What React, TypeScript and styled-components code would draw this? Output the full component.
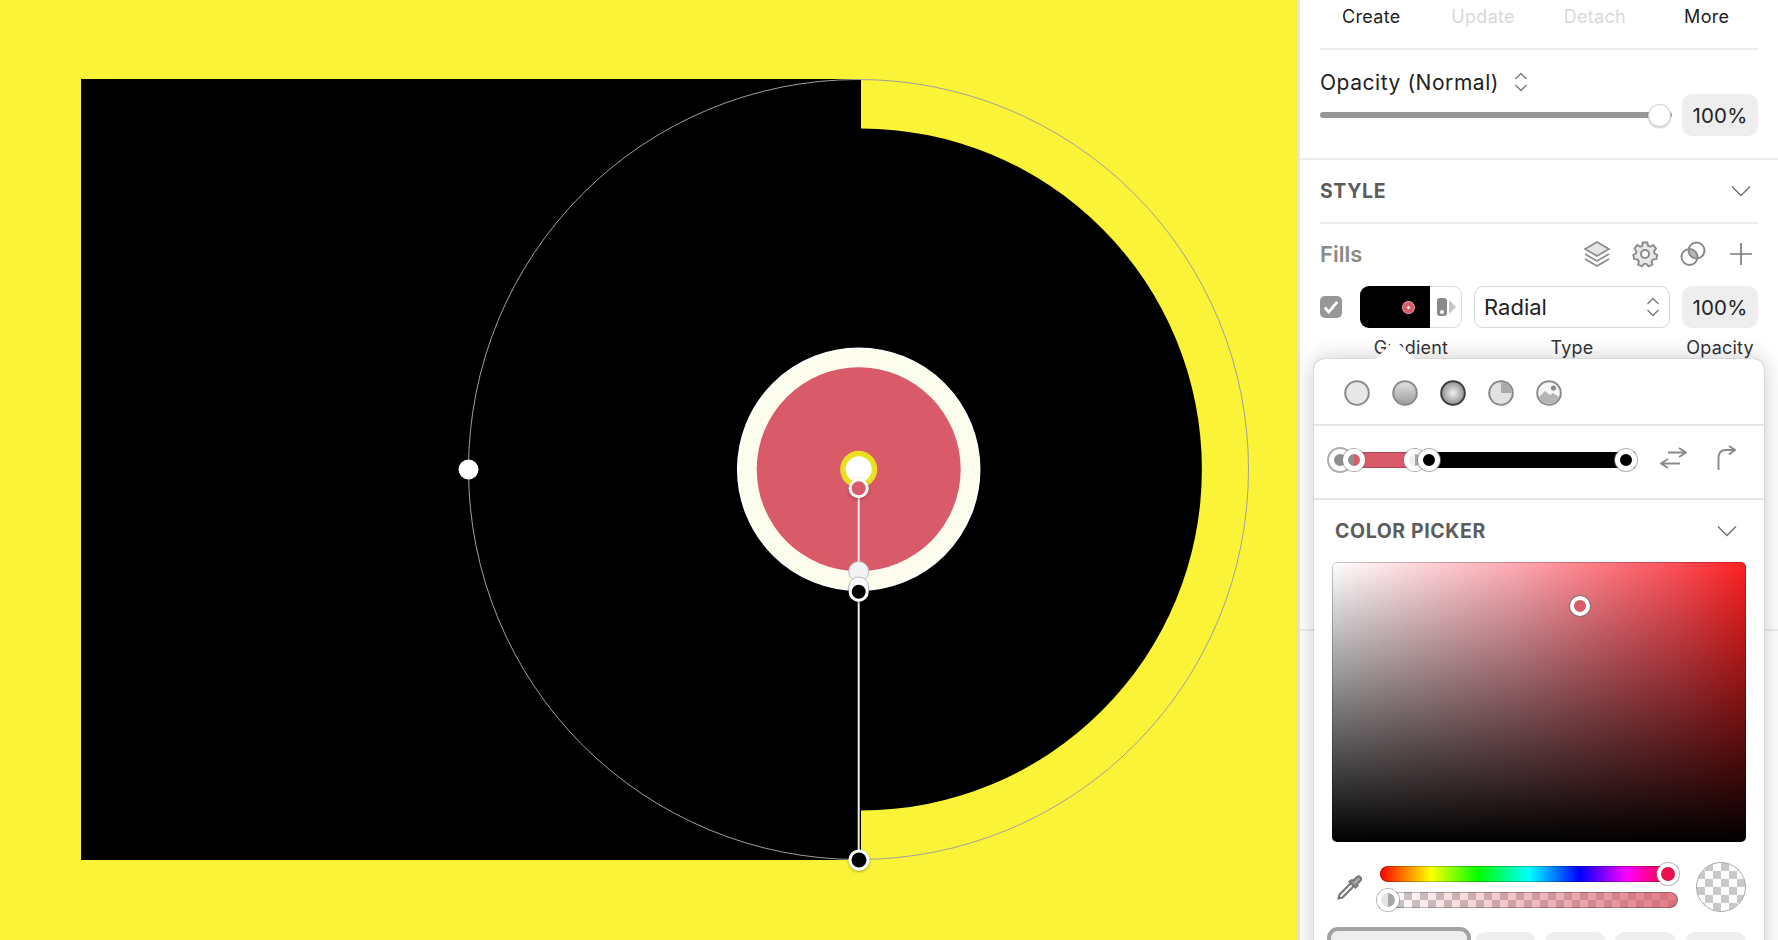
import React from "react";
import styled, { createGlobalStyle } from "styled-components";

const GlobalStyle = createGlobalStyle`
  html, body {
    margin: 0;
    height: 100%;
    overflow: hidden;
    background: #fbf337;
  }
  * {
    box-sizing: border-box;
  }
`;

const Page = styled.div`
  display: flex;
  width: 1778px;
  height: 940px;
  overflow: hidden;
  font-family: Inter, "Liberation Sans", sans-serif;
  color: #1e1e1e;
`;

const Canvas = styled.svg`
  flex: none;
  display: block;
  width: 1298px;
  height: 940px;
  background: #fbf337;
`;

const Panel = styled.aside`
  position: relative;
  flex: none;
  width: 480px;
  height: 940px;
  background: #fff;
  border-left: 2px solid #e4e4e4;
`;

const Tabs = styled.div`
  display: grid;
  grid-template-columns: repeat(4, 111.8px);
  justify-content: center;
  align-items: center;
  height: 50px;
  margin: 0 20px;
  padding-bottom: 16px;
  border-bottom: 2px solid #eaeaea;
`;

const Tab = styled.div<{ $off?: boolean }>`
  text-align: center;
  font-size: 18px;
  letter-spacing: 0.3px;
  color: ${p => (p.$off ? "#d9d9d9" : "#222")};
`;

const OpacitySection = styled.section`
  padding: 20px 20px 0;
  height: 110px;
  border-bottom: 2px solid #ececec;
`;

const BlendLabel = styled.div`
  display: flex;
  align-items: center;
  gap: 15px;
  height: 24px;
  font-size: 21px;
  letter-spacing: 0.55px;
  color: #222;
`;

const SliderRow = styled.div`
  display: flex;
  align-items: center;
  gap: 10px;
`;

const SliderTrack = styled.div`
  position: relative;
  flex: 1;
  height: 6px;
  border-radius: 3px;
  background: #979797;
`;

const SliderThumb = styled.div`
  position: absolute;
  right: 1px;
  top: -8.5px;
  width: 23px;
  height: 23px;
  border-radius: 50%;
  background: #fff;
  border: 1px solid #cfcfcf;
  box-shadow: 0 1px 2px rgba(0, 0, 0, 0.2);
`;

const ValueBox = styled.div`
  flex: none;
  width: 76px;
  height: 42px;
  display: flex;
  align-items: center;
  justify-content: center;
  border-radius: 10px;
  background: #eee;
  font-size: 20.5px;
  letter-spacing: 0.2px;
  color: #222;
`;

const StyleSection = styled.section`
  padding: 0 20px;
`;

const SectionHead = styled.div`
  display: flex;
  align-items: center;
  justify-content: space-between;
  height: 64px;
  padding-right: 7px;
  border-bottom: 2px solid #eaeaea;
`;

const SectionTitle = styled.div`
  font-size: 19.5px;
  font-weight: 700;
  letter-spacing: 0.6px;
  color: #5c5c5c;
`;

const FillsHead = styled.div`
  display: flex;
  align-items: center;
  height: 62px;
  gap: 20px;
  padding: 0 3px 2px 0;
`;

const FillsTitle = styled.div`
  flex: 1;
  font-size: 22px;
  font-weight: 600;
  color: #8a8a8a;
`;

const FillRow = styled.div`
  display: flex;
  align-items: center;
  height: 42px;
`;

const Check = styled.div`
  flex: none;
  width: 22px;
  height: 22px;
  margin-right: 18px;
  display: flex;
  align-items: center;
  justify-content: center;
  border-radius: 5px;
  background: #979797;
`;

const Swatch = styled.div`
  flex: none;
  display: flex;
  width: 102px;
  height: 42px;
  margin-right: 12px;
`;

const SwatchColor = styled.div`
  flex: none;
  width: 70px;
  display: flex;
  align-items: center;
  justify-content: flex-end;
  padding-right: 15px;
  border-radius: 9px 0 0 9px;
  background: #000;
`;

const SwatchDot = styled.div`
  width: 13px;
  height: 13px;
  border-radius: 50%;
  background: radial-gradient(circle, #fff 1px, #d95a68 1.6px);
  border: 1px dotted #fff;
`;

const SwatchIcon = styled.div`
  flex: 1;
  display: flex;
  align-items: center;
  justify-content: center;
  border: 1px solid #dcdcdc;
  border-left: 0;
  border-radius: 0 9px 9px 0;
`;

const Select = styled.div`
  flex: none;
  width: 196px;
  height: 42px;
  margin-right: 12px;
  padding: 0 9px 0 9px;
  display: flex;
  align-items: center;
  justify-content: space-between;
  border: 1px solid #d8d8d8;
  border-radius: 9px;
  font-size: 22px;
  color: #222;
`;

const FillLabels = styled.div`
  display: flex;
  margin-top: 9px;
  font-size: 18px;
  letter-spacing: 0.2px;
  color: #333;
`;

const FillLabel = styled.div<{ $w: number; $gap?: number }>`
  flex: none;
  width: ${p => p.$w}px;
  margin-left: ${p => p.$gap ?? 0}px;
  text-align: center;
`;

const Popover = styled.div`
  position: absolute;
  left: 14px;
  top: 359px;
  width: 450px;
  height: 620px;
  background: #fff;
  border-radius: 10px;
  box-shadow: 0 0 1px rgba(0, 0, 0, 0.45), 0 0 22px rgba(0, 0, 0, 0.22);
`;

const Arrow = styled.div`
  position: absolute;
  left: 60px;
  top: -19px;
  width: 0;
  height: 0;
  border-left: 21px solid transparent;
  border-right: 21px solid transparent;
  border-bottom: 20px solid #fff;
`;

const BehindLine = styled.div`
  position: absolute;
  left: 0;
  right: 0;
  top: 629px;
  height: 2px;
  background: #ececec;
`;

const FillTypes = styled.div`
  display: flex;
  align-items: center;
  gap: 22px;
  height: 67px;
  padding: 3px 0 0 30px;
  border-bottom: 2px solid #e6e6e6;
`;

const GradientRow = styled.div`
  display: flex;
  align-items: center;
  height: 74px;
  padding: 0 24px 0 15px;
  border-bottom: 2px solid #e6e6e6;
`;

const GradientBar = styled.div`
  position: relative;
  flex: none;
  width: 306px;
  height: 16px;
  margin: 0 25px 4px 0;
  background: linear-gradient(
    to right,
    transparent 0 8%,
    #d95a68 8% 29%,
    #000 29% 100%
  );
`;

const BarEdge = styled.div`
  position: absolute;
  left: 25px;
  top: 0;
  width: 65px;
  height: 16px;
  box-shadow: inset 0 0 0 1px rgba(0, 0, 0, 0.22);
`;

const Stop = styled.div<{ $x: number; $c: string; $ghost?: boolean }>`
  position: absolute;
  left: ${p => p.$x}px;
  top: -3px;
  width: 22px;
  height: 22px;
  border-radius: 50%;
  background: ${p => p.$c};
  border: 5px solid #fff;
  box-shadow: 0 0 0 ${p => (p.$ghost ? "2px" : "1px")} rgba(130, 130, 130, 0.65);
`;

const GradientIcons = styled.div`
  display: flex;
  align-items: center;
  gap: 30px;
  margin-bottom: 8px;
`;

const PickerHead = styled.div`
  display: flex;
  align-items: center;
  justify-content: space-between;
  height: 62px;
  padding: 0 27px 0 21px;
`;

const PickerField = styled.div`
  position: relative;
  height: 280px;
  margin: 0 18px;
  border-radius: 5px;
  box-shadow: inset 0 0 0 1px rgba(0, 0, 0, 0.22);
  background: linear-gradient(to top, #000, transparent),
    linear-gradient(to right, #fff, #ffa8b2 45%, #ff4a52 85%, #ff2020);
`;

const PickerHandle = styled.div`
  position: absolute;
  left: 238px;
  top: 34px;
  width: 20px;
  height: 20px;
  border-radius: 50%;
  background: #d95a68;
  border: 4px solid #fff;
  box-shadow: 0 0 0 1px rgba(110, 110, 110, 0.7);
`;

const Controls = styled.div`
  display: flex;
  align-items: center;
  height: 85px;
  padding: 5px 18px 0 22px;
`;

const Dropper = styled.div`
  flex: none;
  width: 44px;
  display: flex;
`;

const Sliders = styled.div`
  flex: none;
  width: 298px;
  margin-right: 18px;
  display: flex;
  flex-direction: column;
  gap: 10px;
`;

const Bar = styled.div`
  position: relative;
  height: 16px;
  border-radius: 8px;
  box-shadow: inset 0 0 0 1px rgba(0, 0, 0, 0.25);
`;

const HueBar = styled(Bar)`
  background: linear-gradient(
    to right,
    #f00,
    #ff0 17%,
    #0f0 33%,
    #0ff 50%,
    #00f 67%,
    #f0f 83%,
    #f00
  );
`;

const AlphaBar = styled(Bar)`
  background: linear-gradient(to right, rgba(217, 90, 104, 0), #d95a68cc),
    repeating-conic-gradient(#c8c8c8 0 25%, #fff 0 50%) 0 0 / 16px 16px;
`;

const BarKnob = styled.div<{ $right?: boolean; $c: string }>`
  position: absolute;
  top: -3px;
  ${p => (p.$right ? "right: -1px;" : "left: -3px;")}
  width: 22px;
  height: 22px;
  border-radius: 50%;
  border: 4px solid #fff;
  background: ${p => p.$c};
  box-shadow: 0 0 0 1px rgba(130, 130, 130, 0.6);
`;

const Transparent = styled.div`
  flex: none;
  width: 50px;
  height: 50px;
  border-radius: 50%;
  border: 1px solid #aaa;
  background: repeating-conic-gradient(#c8c8c8 0 25%, #fff 0 50%) 0 0 / 16px 16px;
`;

const Presets = styled.div`
  display: flex;
  align-items: flex-start;
  gap: 9px;
  padding: 0 18px 0 13px;
`;

const PresetActive = styled.div`
  flex: none;
  width: 144px;
  height: 30px;
  margin-right: -5px;
  border: 4px solid #a3a3a3;
  border-radius: 11px;
  background: #eee;
`;

const Preset = styled.div`
  flex: none;
  width: 61px;
  height: 30px;
  margin-top: 5px;
  border-radius: 10px;
  background: #eee;
`;

const UpDown = () => (
  <svg width="14" height="20" viewBox="0 0 14 20" fill="none" stroke="#7a7a7a" strokeWidth="1.4">
    <path d="M1.5 7L7 1.5 12.5 7M1.5 13L7 18.5 12.5 13" />
  </svg>
);

const Chevron = () => (
  <svg width="20" height="12" viewBox="0 0 20 12" fill="none" stroke="#707070" strokeWidth="1.4">
    <path d="M1 1.5l9 9 9-9" />
  </svg>
);

const FillType = ({ kind }: { kind: number }) => {
  const id = `ft${kind}`;
  const ring = kind === 2 ? "#3c3c3c" : "#8a8a8a";
  return (
    <svg width="26" height="26" viewBox="0 0 26 26">
      <defs>
        <linearGradient id={`${id}l`} x1="0" y1="0" x2="0" y2="1">
          <stop offset="0" stopColor="#e2e2e2" />
          <stop offset="1" stopColor="#9c9c9c" />
        </linearGradient>
        <radialGradient id={`${id}r`}>
          <stop offset="0" stopColor="#f0f0f0" />
          <stop offset="1" stopColor="#8f8f8f" />
        </radialGradient>
      </defs>
      <circle
        cx="13"
        cy="13"
        r="11.8"
        strokeWidth="2"
        stroke={ring}
        fill={
          kind === 0
            ? "#e8e8e8"
            : kind === 2
            ? `url(#${id}r)`
            : kind === 1
            ? `url(#${id}l)`
            : kind === 3
            ? "#e2e2e2"
            : "#f6f6f6"
        }
      />
      {kind === 3 && <path d="M13 2.2v10.8h10.8A10.8 10.8 0 0 0 13 2.2z" fill="#ababab" />}
      {kind === 4 && (
        <>
          <circle cx="17.5" cy="8" r="2.6" fill="#8a8a8a" />
          <path d="M3 17l6-6 5 4 3-2 6 4a10.8 10.8 0 0 1-20 0z" fill="#b5b5b5" />
        </>
      )}
    </svg>
  );
};

const App = () => (
  <Page>
    <GlobalStyle />
    <Canvas viewBox="0 0 1298 940">
      <defs>
        <filter id="knob" x="-40%" y="-40%" width="180%" height="180%">
          <feDropShadow dx="0" dy="1" stdDeviation="1.5" floodOpacity="0.4" />
        </filter>
      </defs>
      <rect x="81" y="79" width="780" height="781" fill="#000" />
      <path d="M861 128.5a341 341 0 0 1 0 682z" fill="#000" />
      <circle cx="858.7" cy="469.3" r="121" fill="#fdfdee" stroke="#fff" strokeWidth="1.5" />
      <circle cx="858.7" cy="469.3" r="102" fill="#d95a68" />
      <circle cx="858.5" cy="469.5" r="390" fill="none" stroke="#a0a0a0" strokeWidth="1" />
      <line x1="858.7" y1="488" x2="858.7" y2="860" stroke="#ececec" strokeWidth="2" />
      <circle cx="858.7" cy="469.3" r="18.5" fill="#e9e01f" />
      <circle cx="858.7" cy="469.3" r="13" fill="#fff" />
      <circle cx="858.7" cy="488.3" r="8.5" fill="#d95a68" stroke="#fff" strokeWidth="3" filter="url(#knob)" />
      <circle cx="858.7" cy="571.5" r="10" fill="#f3f3f3" stroke="#bbb" strokeWidth="1" />
      <circle cx="858.7" cy="587" r="10" fill="#fff" stroke="#bbb" strokeWidth="1" />
      <circle cx="858.7" cy="591.7" r="8.5" fill="#000" stroke="#fff" strokeWidth="3" filter="url(#knob)" />
      <circle cx="859" cy="860" r="9" fill="#000" stroke="#fff" strokeWidth="3" filter="url(#knob)" />
      <circle cx="468.5" cy="469.5" r="10" fill="#fff" />
    </Canvas>
    <Panel>
      <Tabs>
        <Tab>Create</Tab>
        <Tab $off>Update</Tab>
        <Tab $off>Detach</Tab>
        <Tab>More</Tab>
      </Tabs>
      <OpacitySection>
        <BlendLabel>
          Opacity (Normal)
          <UpDown />
        </BlendLabel>
        <SliderRow>
          <SliderTrack>
            <SliderThumb />
          </SliderTrack>
          <ValueBox>100%</ValueBox>
        </SliderRow>
      </OpacitySection>
      <StyleSection>
        <SectionHead>
          <SectionTitle>STYLE</SectionTitle>
          <Chevron />
        </SectionHead>
        <FillsHead>
          <FillsTitle>Fills</FillsTitle>
          <svg width="28" height="28" viewBox="0 0 28 28" fill="none" stroke="#8a8a8a" strokeWidth="1.6">
            <path d="M14 2L26 9l-12 7L2 9z" fill="#e6e6e6" />
            <path d="M2 14l12 7 12-7M2 19l12 7 12-7" />
          </svg>
          <svg width="28" height="28" viewBox="0 0 28 28" fill="#e8e8e8" stroke="#8a8a8a" strokeWidth="2">
            <path d="M11.5 2.5h5l.8 3.4 2.3 1 3-1.8 3 3.6-2 2.8.4 2.5 2.9 1.5-1 4.5-3.4.2-1.5 2.1.9 3.3-4.2 2-2.1-2.7h-2.6l-2.1 2.7-4.2-2 .9-3.3-1.5-2.1-3.4-.2-1-4.5 2.9-1.5.4-2.5-2-2.8 3-3.6 3 1.8 2.3-1z" transform="scale(.95) translate(.7 .2)" />
            <circle cx="14" cy="14" r="4" fill="#fff" />
          </svg>
          <svg width="28" height="28" viewBox="0 0 28 28" fill="none" stroke="#8a8a8a" strokeWidth="2">
            <path d="M9.63 9.04A8 8 0 0 1 18.37 18.46 8 8 0 0 1 9.63 9.04z" fill="#b8b8b8" stroke="none" />
            <circle cx="10.5" cy="17" r="8" />
            <circle cx="17.5" cy="10.5" r="8" />
          </svg>
          <svg width="28" height="28" viewBox="0 0 28 28" fill="none" stroke="#7c7c7c" strokeWidth="1.7">
            <path d="M14 3v22M3 14h22" />
          </svg>
        </FillsHead>
        <FillRow>
          <Check>
            <svg width="18" height="18" viewBox="0 0 16 16" fill="none" stroke="#fff" strokeWidth="2.6">
              <path d="M2.5 8.5l3.5 4 7.5-9" />
            </svg>
          </Check>
          <Swatch>
            <SwatchColor>
              <SwatchDot />
            </SwatchColor>
            <SwatchIcon>
              <svg width="20" height="20" viewBox="0 0 20 20">
                <rect x="1" y="1" width="10" height="18" rx="3" fill="#8a8a8a" />
                <circle cx="6" cy="15" r="2" fill="#fff" />
                <path d="M13 3l7 7-7 7z" fill="#c4c4c4" />
              </svg>
            </SwatchIcon>
          </Swatch>
          <Select>
            Radial
            <UpDown />
          </Select>
          <ValueBox>100%</ValueBox>
        </FillRow>
        <FillLabels>
          <FillLabel $w={182}>Gradient</FillLabel>
          <FillLabel $w={140}>Type</FillLabel>
          <FillLabel $w={116} $gap={20}>Opacity</FillLabel>
        </FillLabels>
      </StyleSection>
      <BehindLine />
      <Popover>
        <Arrow />
        <FillTypes>
          {[0, 1, 2, 3, 4].map(k => (
            <FillType key={k} kind={k} />
          ))}
        </FillTypes>
        <GradientRow>
          <GradientBar>
            <BarEdge />
            <Stop $x={0} $c="#8f8f8f" $ghost />
            <Stop $x={14} $c="linear-gradient(to right, #8f8f8f 50%, #d95a68 50%)" />
            <Stop $x={75} $c="linear-gradient(to right, #f0f0f0 50%, #a8a8a8 50%)" />
            <Stop $x={89} $c="#000" />
            <Stop $x={286} $c="#000" />
          </GradientBar>
          <GradientIcons>
            <svg width="27" height="24" viewBox="0 0 27 24" fill="none" stroke="#8a8a8a" strokeWidth="1.9">
              <path d="M8 6.5h18M19 2l7 4.5L19 11" />
              <path d="M20 17.5H1M8 13l-7 4.5L8 22" />
            </svg>
            <svg width="19" height="26" viewBox="0 0 19 26" fill="none" stroke="#8a8a8a" strokeWidth="1.9">
              <path d="M1.5 25V13Q1.5 5 9 5h9M12 1l6 4-6 4.5" />
            </svg>
          </GradientIcons>
        </GradientRow>
        <PickerHead>
          <SectionTitle>COLOR PICKER</SectionTitle>
          <Chevron />
        </PickerHead>
        <PickerField>
          <PickerHandle />
        </PickerField>
        <Controls>
          <Dropper>
            <svg width="28" height="28" viewBox="0 0 28 28" fill="#f0f0f0" stroke="#777" strokeWidth="2">
              <path d="M2.5 25.5l1-4L15 10l3 3L6.5 24.5z" />
              <path d="M13.5 8.5l6 6 2-2-1-1 4-4a2.5 2.5 0 0 0-3.5-3.5l-4 4-1-1z" fill="#a8a8a8" />
            </svg>
          </Dropper>
          <Sliders>
            <HueBar>
              <BarKnob $right $c="#e8104f" />
            </HueBar>
            <AlphaBar>
              <BarKnob $c="linear-gradient(to right, #e4e4e4 50%, #a8a8a8 50%)" />
            </AlphaBar>
          </Sliders>
          <Transparent />
        </Controls>
        <Presets>
          <PresetActive />
          <Preset />
          <Preset />
          <Preset />
          <Preset />
        </Presets>
      </Popover>
    </Panel>
  </Page>
);

export default App;
